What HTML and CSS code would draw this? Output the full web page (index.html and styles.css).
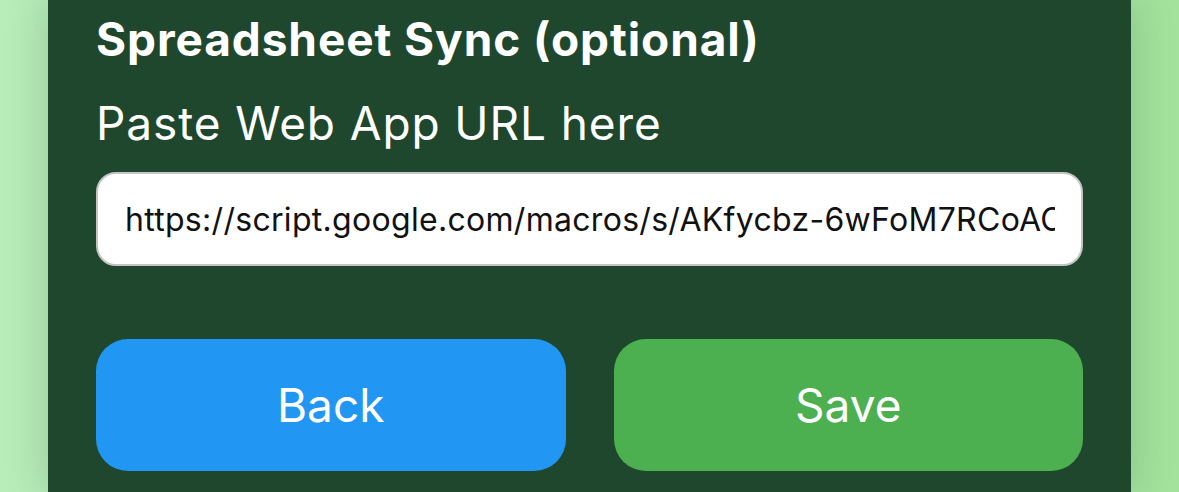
FILE: index.html
```html
<!DOCTYPE html>
<html lang="en">
<head>
<meta charset="utf-8">
<title>Spreadsheet Sync</title>
<link rel="stylesheet" href="styles.css">
</head>
<body>
<main class="panel">
  <h2 class="title">Spreadsheet Sync (optional)</h2>
  <label class="label" for="url">Paste Web App URL here</label>
  <input class="url-input" id="url" type="text" value="https://script.google.com/macros/s/AKfycbz-6wFoM7RCoACxYz1234567890/exec">
  <div class="actions">
    <button class="btn btn-back" type="button">Back</button>
    <button class="btn btn-save" type="button">Save</button>
  </div>
</main>
</body>
</html>
```
FILE: styles.css
```css
html, body {
  margin: 0;
  height: 100%;
}
body {
  background: linear-gradient(90deg, #b8ecb8 0%, #a6e2a3 50%, #a2e29d 100%);
  font-family: Inter, "Noto Sans", "Liberation Sans", sans-serif;
  overflow: hidden;
}
.panel {
  box-sizing: border-box;
  margin: 0 48px;
  height: 100%;
  padding: 12px 48px 0;
  background: #1f472d;
  box-shadow: 0 0 40px rgba(0, 40, 0, 0.18);
  display: flex;
  flex-direction: column;
}
.title {
  margin: 0;
  font-size: 46px;
  line-height: 1.2;
  font-weight: 700;
  letter-spacing: 0.9px;
  color: #ffffff;
}
.label {
  margin-top: 29px;
  font-size: 46px;
  line-height: 1.2;
  font-weight: 400;
  letter-spacing: 0.9px;
  color: #ffffff;
}
.url-input {
  box-sizing: border-box;
  margin-top: 21px;
  width: 100%;
  height: 94px;
  padding: 0 26px 0 27px;
  border: 2px solid #c4c4c4;
  border-radius: 20px;
  background: #ffffff;
  font-family: Inter, "Noto Sans", "Liberation Sans", sans-serif;
  font-size: 32px;
  letter-spacing: 0.3px;
  color: #111111;
  outline: none;
}
.actions {
  margin-top: 73px;
  display: grid;
  grid-template-columns: 1fr 1fr;
  gap: 48px;
}
.btn {
  height: 132px;
  border: none;
  border-radius: 32px;
  font-family: Inter, "Noto Sans", "Liberation Sans", sans-serif;
  font-size: 46px;
  font-weight: 400;
  color: #ffffff;
}
.btn-back {
  background: #2196f3;
}
.btn-save {
  background: #4caf50;
}
```
